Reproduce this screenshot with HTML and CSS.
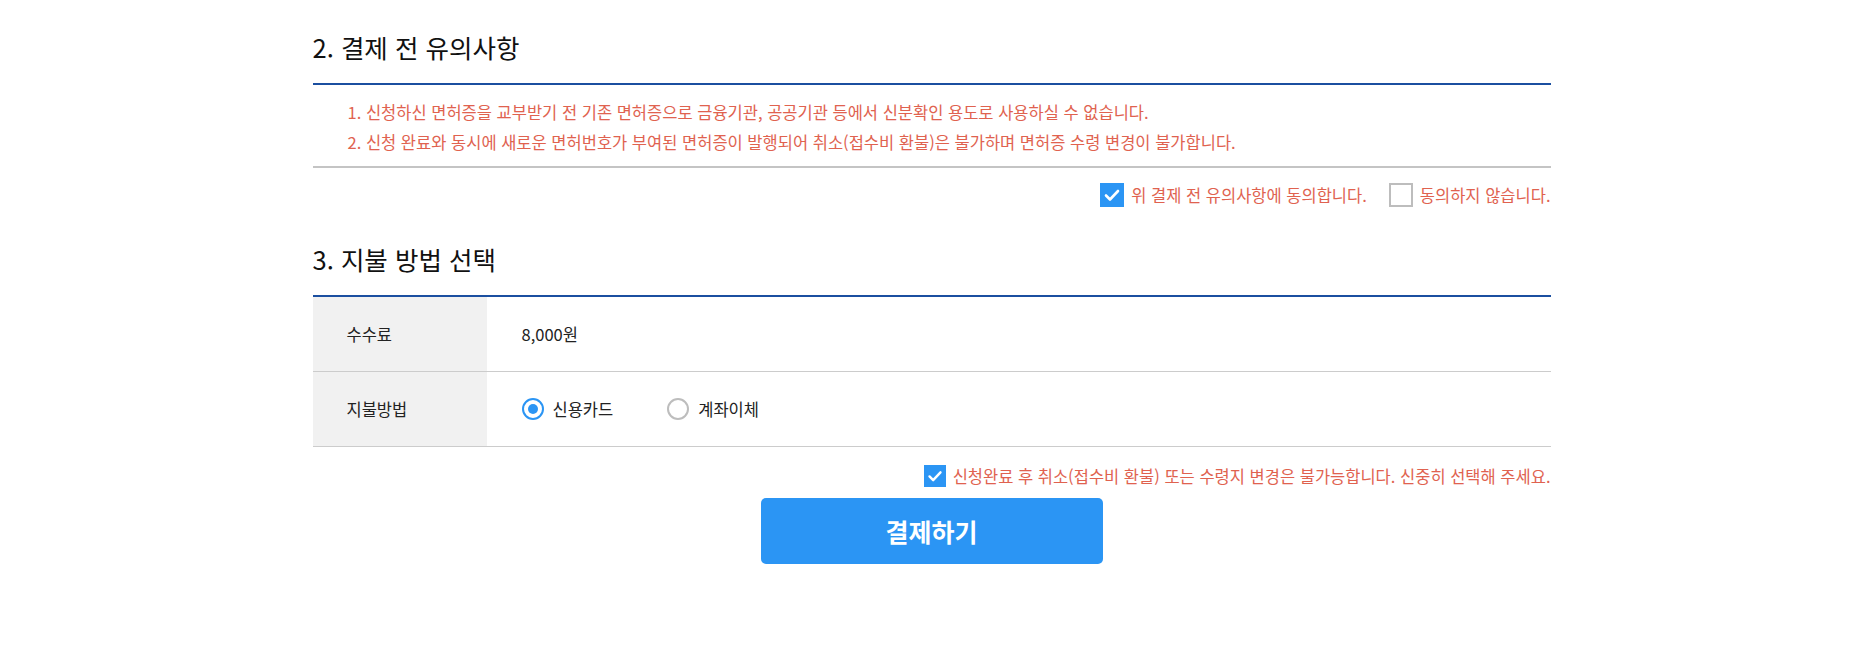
FILE: index.html
```html
<!DOCTYPE html>
<html lang="ko">
<head>
  <meta charset="UTF-8" />
  <meta name="viewport" content="width=device-width, initial-scale=1.0"/>
  <title>결제</title>
  <link rel="stylesheet" href="styles.css">
</head>
<body>
  <div class="wrap">
    <h2 class="section-title">2. 결제 전 유의사항</h2>
    <ol class="notice">
      <li>1. 신청하신 면허증을 교부받기 전 기존 면허증으로 금융기관, 공공기관 등에서 신분확인 용도로 사용하실 수 없습니다.</li>
      <li>2. 신청 완료와 동시에 새로운 면허번호가 부여된 면허증이 발행되어 취소(접수비 환불)은 불가하며 면허증 수령 변경이 불가합니다.</li>
    </ol>
    <div class="agree-row">
      <label class="check-item">
        <span class="box checked"><svg viewBox="0 0 24 24" width="24" height="24"><path d="M6 12.5l4 4 8-8.5" fill="none" stroke="#fff" stroke-width="2.6" stroke-linecap="round" stroke-linejoin="round"/></svg></span>
        위 결제 전 유의사항에 동의합니다.
      </label>
      <label class="check-item">
        <span class="box"></span>
        동의하지 않습니다.
      </label>
    </div>

    <h2 class="section-title title-pay">3. 지불 방법 선택</h2>
    <div class="pay-table">
      <div class="pay-row">
        <div class="pay-label">수수료</div>
        <div class="pay-value">8,000원</div>
      </div>
      <div class="pay-row">
        <div class="pay-label">지불방법</div>
        <div class="pay-value radios">
          <label class="radio-item"><span class="radio on"></span>신용카드</label>
          <label class="radio-item"><span class="radio"></span>계좌이체</label>
        </div>
      </div>
    </div>
    <div class="agree-row final">
      <label class="check-item">
        <span class="box checked small"><svg viewBox="0 0 24 24" width="22" height="22"><path d="M6 12.5l4 4 8-8.5" fill="none" stroke="#fff" stroke-width="2.6" stroke-linecap="round" stroke-linejoin="round"/></svg></span>
        신청완료 후 취소(접수비 환불) 또는 수령지 변경은 불가능합니다. 신중히 선택해 주세요.
      </label>
    </div>
    <div class="btn-area">
      <button class="pay-btn">결제하기</button>
    </div>
  </div>
</body>
</html>
```

FILE: styles.css
```css
body { margin: 0; background: #fff; color: #111; font-family: "Noto Sans CJK KR", "Noto Sans", sans-serif; }
.wrap { width: 1238px; margin: 0 auto; padding-bottom: 100px; }

.section-title { margin: 0; padding: 30px 0 19px; font-size: 25.5px; line-height: 34px; font-weight: 400; color: #111; }
.title-pay { padding-top: 35px; }

.notice { list-style: none; margin: 0; padding: 12px 0 9px 35px; border-top: 2px solid #1b4fa0; border-bottom: 2px solid #c4c4c4; }
.notice li { font-size: 16.5px; line-height: 30px; color: #e0624f; }

.agree-row { display: flex; justify-content: flex-end; align-items: center; gap: 22px; margin-top: 15px; }
.agree-row.final { margin-top: 17px; }
.check-item { display: flex; align-items: center; gap: 7px; font-size: 16.5px; line-height: 24px; color: #e0624f; cursor: pointer; }
.box { width: 24px; height: 24px; box-sizing: border-box; border: 2px solid #bdbdbd; background: #fff; display: flex; }
.box.checked { border: 0; background: #2b95f4; }
.box.small { width: 22px; height: 22px; }

.pay-table { border-top: 2px solid #1b4fa0; }
.pay-row { display: flex; height: 74px; border-bottom: 1px solid #cccccc; font-size: 16.5px; color: #222; }
.pay-label { width: 140px; padding-left: 34px; background: #f1f1f1; display: flex; align-items: center; }
.pay-value { padding-left: 35px; display: flex; align-items: center; }
.radios { gap: 54px; }
.radio-item { display: flex; align-items: center; gap: 9px; cursor: pointer; }
.radio { width: 22px; height: 22px; box-sizing: border-box; border: 2px solid #bdbdbd; border-radius: 50%; display: flex; align-items: center; justify-content: center; }
.radio.on { border-color: #2b95f4; }
.radio.on::after { content: ""; width: 10px; height: 10px; border-radius: 50%; background: #2b95f4; }

.btn-area { display: flex; justify-content: center; margin-top: 10px; }
.pay-btn { width: 342px; height: 66px; border: 0; border-radius: 5px; background: #2b95f4; color: #fff; font-family: inherit; font-size: 25px; font-weight: 700; cursor: pointer; }
.pay-btn:hover { background: #1f86e4; }
```
